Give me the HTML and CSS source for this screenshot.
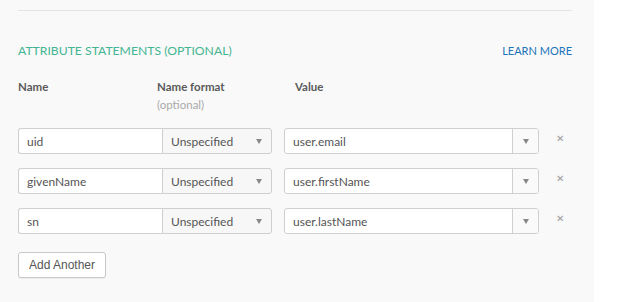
FILE: index.html
```html
<!DOCTYPE html>
<html lang="en">
<head>
    <meta charset="UTF-8">
    <title>Attribute Statements</title>
    <link rel="stylesheet" href="styles.css">
</head>
<body>
    <div class="panel">
        <hr class="divider">

        <div class="section-head">
            <h3 class="section-title">ATTRIBUTE STATEMENTS (OPTIONAL)</h3>
            <a class="learn-more" href="#">LEARN MORE</a>
        </div>

        <div class="col-labels">
            <div class="col-label col-name">Name</div>
            <div class="col-label col-format">Name format<span class="hint">(optional)</span></div>
            <div class="col-label col-value">Value</div>
        </div>

        <div class="attr-row">
            <input class="name-input" type="text" value="uid">
            <div class="format-select">Unspecified<span class="caret"></span></div>
            <div class="value-combo">
                <input class="value-input" type="text" value="user.email">
                <span class="combo-btn"><span class="caret"></span></span>
            </div>
            <button class="remove-btn">&#x2715;</button>
        </div>
        <div class="attr-row">
            <input class="name-input" type="text" value="givenName">
            <div class="format-select">Unspecified<span class="caret"></span></div>
            <div class="value-combo">
                <input class="value-input" type="text" value="user.firstName">
                <span class="combo-btn"><span class="caret"></span></span>
            </div>
            <button class="remove-btn">&#x2715;</button>
        </div>
        <div class="attr-row">
            <input class="name-input" type="text" value="sn">
            <div class="format-select">Unspecified<span class="caret"></span></div>
            <div class="value-combo">
                <input class="value-input" type="text" value="user.lastName">
                <span class="combo-btn"><span class="caret"></span></span>
            </div>
            <button class="remove-btn">&#x2715;</button>
        </div>

        <button class="add-btn">Add Another</button>
    </div>
</body>
</html>
```
FILE: styles.css
```css
body {
    margin: 0;
    background-color: #fff;
    font-family: Lato, "Open Sans", sans-serif;
    color: #555;
}

.panel {
    width: 594px;
    height: 302px;
    box-sizing: border-box;
    background-color: #f9f9f9;
    padding: 10px 22px 0 18px;
}

.divider {
    margin: 0;
    border: none;
    border-top: 1px solid #e4e4e4;
}

.section-head {
    display: flex;
    justify-content: space-between;
    align-items: baseline;
    margin-top: 32px;
}

.section-title {
    margin: 0;
    font-size: 12.2px;
    font-weight: 400;
    color: #43b592;
}

.learn-more {
    font-size: 11px;
    color: #1b75bb;
    text-decoration: none;
}

.col-labels {
    display: flex;
    margin-top: 22px;
    font-size: 11.5px;
    font-weight: 700;
    color: #5a5a5a;
}

.col-name {
    width: 139px;
}

.col-format {
    width: 138px;
}

.hint {
    display: block;
    margin-top: 5px;
    font-weight: 400;
    color: #aaa;
}

.attr-row {
    display: flex;
    align-items: center;
    height: 26px;
    margin-top: 14px;
}

.col-labels + .attr-row {
    margin-top: 17px;
}

.name-input,
.value-input {
    font-family: inherit;
    font-size: 12px;
    color: #555;
    outline: none;
}

.name-input {
    width: 144px;
    height: 26px;
    box-sizing: border-box;
    padding: 0 8px;
    border: 1px solid #cfcfcf;
    border-right: none;
    border-radius: 3px 0 0 3px;
    background-color: #fff;
}

.format-select {
    width: 110px;
    height: 26px;
    box-sizing: border-box;
    display: flex;
    align-items: center;
    justify-content: space-between;
    padding: 0 9px 0 8px;
    border: 1px solid #cfcfcf;
    border-radius: 0 3px 3px 0;
    background-color: #f7f7f7;
    font-size: 12px;
    color: #555;
}

.caret {
    width: 0;
    height: 0;
    border-left: 3px solid transparent;
    border-right: 3px solid transparent;
    border-top: 5px solid #888;
}

.value-combo {
    display: flex;
    width: 255px;
    height: 26px;
    box-sizing: border-box;
    margin-left: 12px;
    border: 1px solid #cfcfcf;
    border-radius: 3px;
    background-color: #fff;
    overflow: hidden;
}

.value-input {
    flex-grow: 1;
    min-width: 0;
    border: none;
    padding: 0 8px;
    background: transparent;
}

.combo-btn {
    width: 25px;
    display: flex;
    align-items: center;
    justify-content: center;
    border-left: 1px solid #cfcfcf;
    background-color: #fafafa;
}

.remove-btn {
    margin: 0 0 6px 17px;
    padding: 0;
    border: none;
    background: none;
    font-family: "DejaVu Sans", sans-serif;
    font-size: 10px;
    color: #999;
    cursor: pointer;
}

.add-btn {
    display: block;
    margin-top: 18px;
    width: 88px;
    height: 26px;
    border: 1px solid #c8c8c8;
    border-radius: 3px;
    background-color: #fff;
    font-family: "Liberation Sans", Arial, sans-serif;
    font-size: 12px;
    color: #555;
    box-shadow: 0 1px 1px rgba(0, 0, 0, 0.06);
}
```
